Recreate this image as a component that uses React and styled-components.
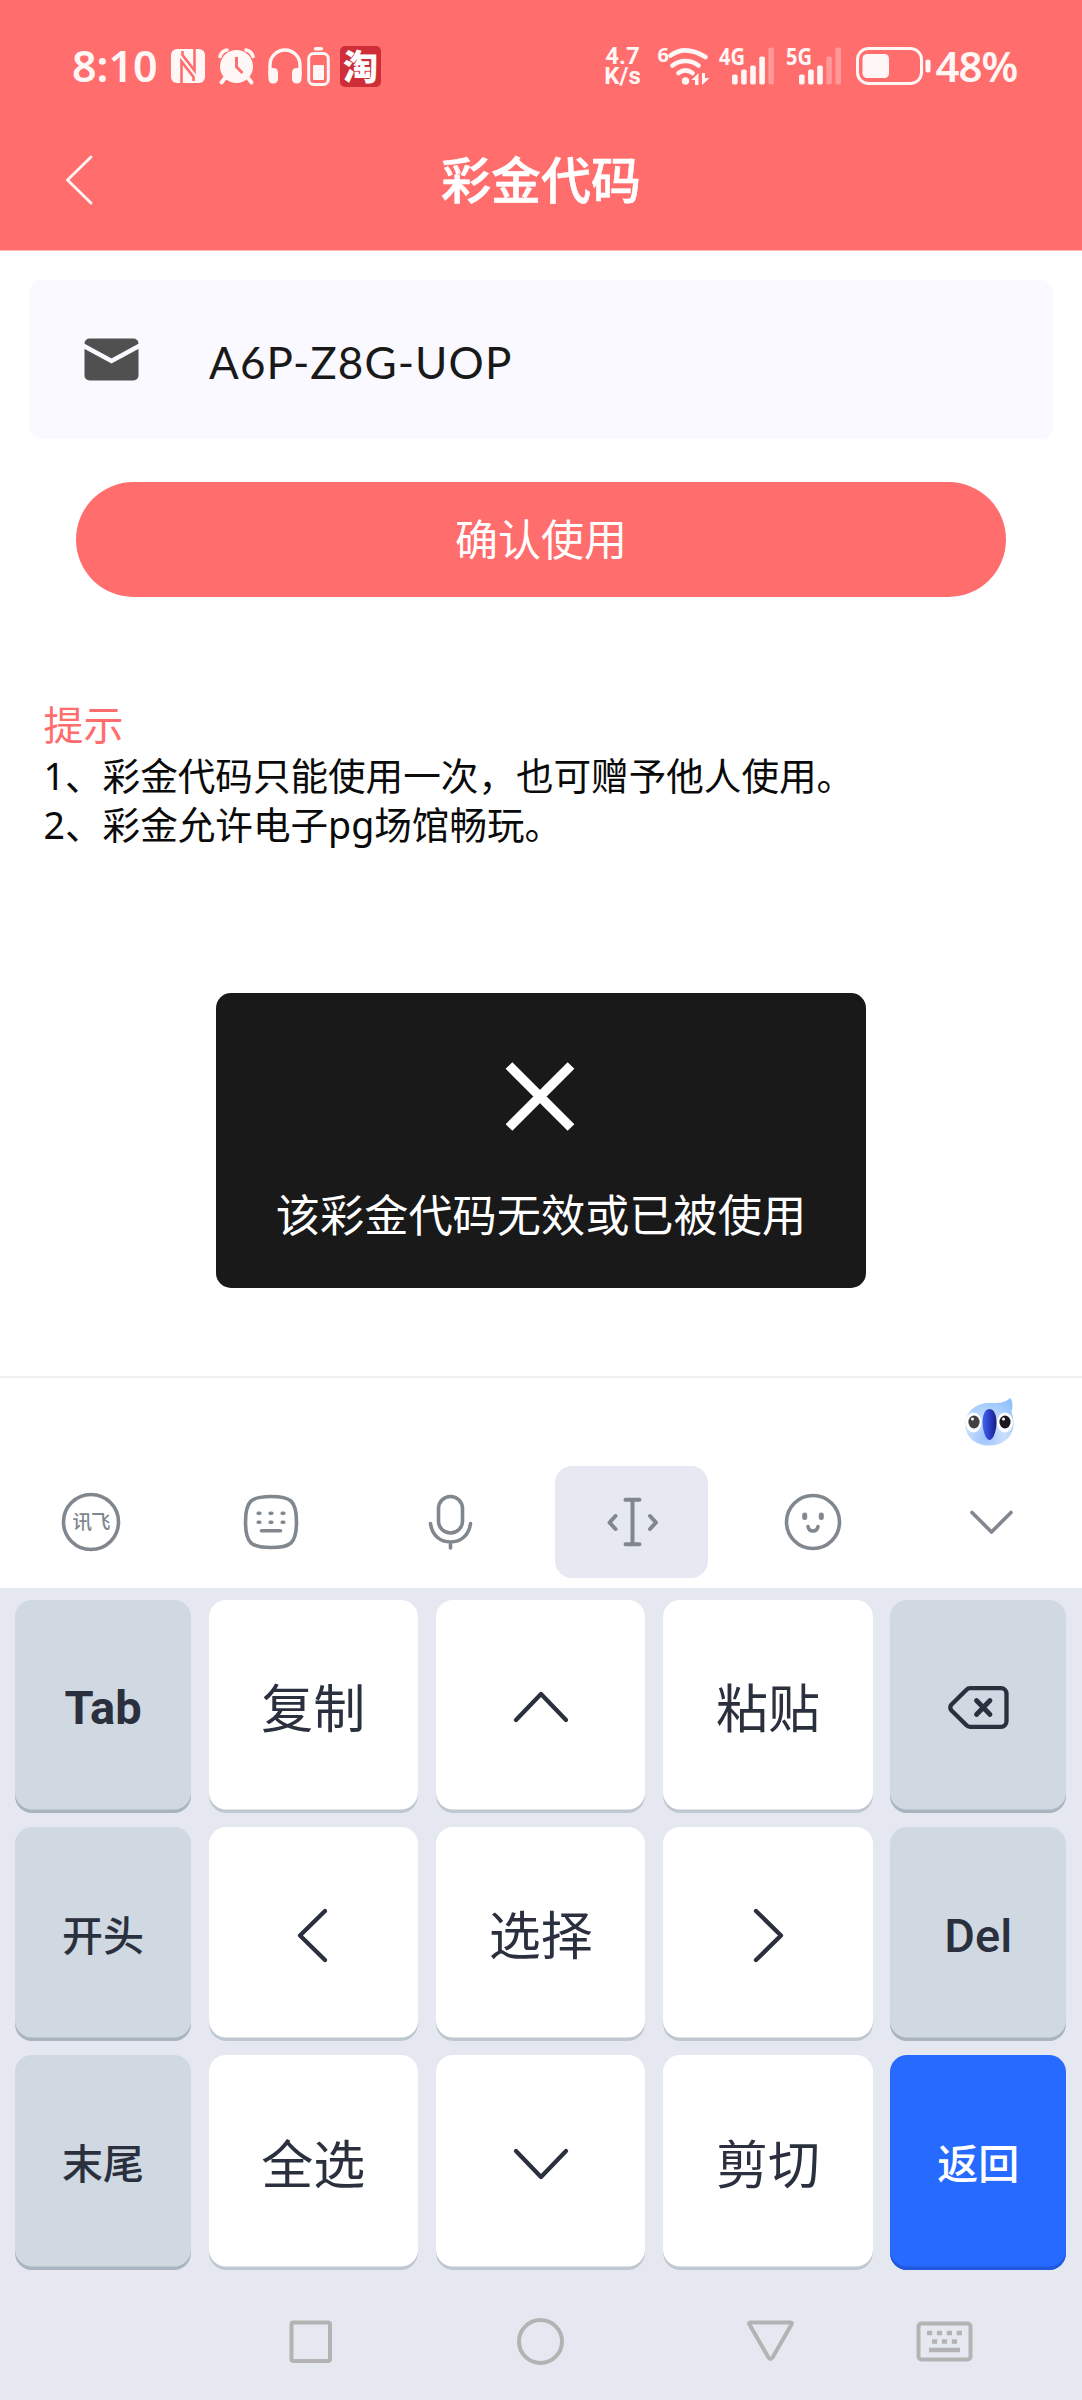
import React from 'react';
import styled, { createGlobalStyle } from 'styled-components';

const coral = '#ff6d6d';
const ink = '#2a303d';
const sans = `Lato, "Noto Sans CJK SC", sans-serif`;

const GlobalStyle = createGlobalStyle`
  * { box-sizing: border-box; }
  body { margin: 0; background: #fff; }
  svg { display: block; flex: none; overflow: visible; }
`;

const Screen = styled.div`
  position: relative;
  width: 1082px;
  height: 2400px;
  display: flex;
  flex-direction: column;
  overflow: hidden;
  background: #fff;
  font-family: ${sans};
`;

const Header = styled.header`
  flex: none;
  height: 250px;
  background: ${coral};
  color: #fff;
  box-shadow: 0 1px 0 #ffb9b9;
`;

const StatusBar = styled.div`
  height: 132px;
  padding: 0 64.5px 0 72px;
  display: flex;
  align-items: center;
  color: #fff6f6;
`;

const Slot = styled.div`
  flex: none;
  width: ${(p) => p.$w}px;
  margin-left: ${(p) => p.$gap || 0}px;
`;

const StatusText = styled.span`
  display: block;
  font: 600 ${(p) => p.$size || 44}px/44px "Noto Sans", sans-serif;
  letter-spacing: ${(p) => p.$track || 0}px;
  white-space: nowrap;
`;

const Speed = styled.div`
  display: flex;
  flex-direction: column;
  align-items: center;
  font: 700 24px/20px Roboto, sans-serif;
  white-space: nowrap;
`;

const Spacer = styled.div`
  flex: 1;
`;

const AppBadge = styled.div`
  width: 41px;
  height: 41px;
  border-radius: 5px;
  background: #cf2d38;
  color: #fff;
  font: 900 35px/37px "Noto Sans CJK SC", sans-serif;
  text-align: center;
`;

const TitleBar = styled.div`
  height: 96px;
  display: grid;
  grid-template-columns: 160px 1fr 160px;
  align-items: center;
`;

const BackButton = styled.button`
  border: 0;
  padding: 0 0 0 65px;
  background: none;
`;

const Title = styled.h1`
  margin: 0;
  text-align: center;
  font-size: 50px;
  line-height: 60px;
  font-weight: 500;
  -webkit-text-stroke: 0.6px #fff;
`;

const CodeField = styled.div`
  flex: none;
  height: 159px;
  margin: 30px 29px 0;
  padding: 0 55px;
  border-radius: 13px;
  background: #f9f9ff;
  display: flex;
  align-items: center;
`;

const Code = styled.span`
  margin: 4px 0 0 70px;
  font-size: 44px;
  line-height: 60px;
  letter-spacing: 1.1px;
  color: #191919;
  white-space: nowrap;
`;

const Confirm = styled.button`
  flex: none;
  height: 115px;
  margin: 43px 76px 0;
  padding: 0;
  border: 0;
  border-radius: 58px;
  background: ${coral};
  color: #fff;
  font-family: ${sans};
  font-size: 43px;
  line-height: 1;
`;

const Tips = styled.section`
  flex: none;
  margin: 101px 0 0 43.5px;
  color: #0a0a0a;
  font-family: "Noto Sans", "Noto Sans CJK SC", sans-serif;
  font-size: 37.6px;
  line-height: 49px;
`;

const TipsTitle = styled.h2`
  margin: 0;
  font-size: 40px;
  font-weight: 400;
  line-height: 53px;
  color: ${coral};
`;

const TipLine = styled.p`
  margin: 0;
  white-space: nowrap;
`;

const Toast = styled.div`
  position: absolute;
  top: 993px;
  left: 216px;
  width: 650px;
  height: 295px;
  padding-top: 69px;
  border-radius: 15px;
  background: #191919;
  color: #fff;
  display: flex;
  flex-direction: column;
  align-items: center;
  gap: 54px;
  font-size: 44.2px;
  line-height: 60px;
  white-space: nowrap;
`;

const Keyboard = styled.section`
  flex: none;
  height: 1024px;
  margin-top: auto;
  border-top: 2px solid #eef1f4;
  display: flex;
  flex-direction: column;
`;

const Suggestions = styled.div`
  flex: none;
  height: 82px;
  padding: 20px 67px 0 0;
  display: flex;
  justify-content: flex-end;
`;

const Tools = styled.div`
  flex: none;
  height: 128px;
  padding: 6px 0 0 1px;
  display: grid;
  grid-template-columns: repeat(6, 1fr);
  justify-items: center;
`;

const Tool = styled.div`
  width: 153px;
  height: 112px;
  border-radius: 17px;
  background: ${(p) => (p.$active ? '#e6e9f1' : 'transparent')};
  display: flex;
  align-items: center;
  justify-content: center;
`;

const LowerArea = styled.div`
  flex: 1;
  background: #e5e8f0;
`;

const Keys = styled.div`
  padding: 12px 15px 0 15.3px;
  display: grid;
  grid-template-columns: 175.5px repeat(3, 209.5px) 175.5px;
  grid-template-rows: 213px 214px 215px;
  gap: 14px 17.8px;
`;

const tones = {
  light: ['#ffffff', '#bfc7d0', ink],
  grey: ['#d0d8e2', '#aab4c0', ink],
  blue: ['#266aff', '#2059dc', '#ffffff'],
};

const Key = styled.button`
  border: 0;
  padding: 2px 0 0;
  border-radius: 17px;
  background: ${(p) => tones[p.$tone][0]};
  box-shadow: inset 0 -3.5px 0 ${(p) => tones[p.$tone][1]};
  color: ${(p) => tones[p.$tone][2]};
  display: flex;
  align-items: center;
  justify-content: center;
  font-family: ${(p) => (p.$latin ? 'Roboto, ' : '')}${sans};
  font-size: ${(p) => (p.$latin ? 47 : p.$tone === 'light' ? 52 : 41)}px;
  font-weight: ${(p) => p.$weight || (p.$tone === 'light' ? 400 : 500)};
  line-height: 1;
`;

const NavBar = styled.nav`
  height: 130px;
  padding: 12px 0 0 289px;
  display: flex;
  align-items: center;
`;

const strokeProps = { fill: 'none', strokeLinecap: 'round', strokeLinejoin: 'round' };

const NfcIcon = () => (
  <svg width="34" height="34" viewBox="0 0 34 34">
    <rect width="34" height="34" rx="6" fill="#fff6f6" />
    <g fill="none" stroke={coral} strokeWidth="2.6">
      <path d="M10.500 34V12.500L22.500 28v4" />
      <path d="M23.500 0v21.500L11.500 6V2" />
    </g>
  </svg>
);

const AlarmIcon = () => (
  <svg width="37" height="37" viewBox="0 0 37 37">
    <circle cx="18.500" cy="18.500" r="16.500" fill="#fff6f6" />
    <g stroke="#fff6f6" {...strokeProps}>
      <path d="M2 8.500C3 5 6 2.500 9 2M35 8.500C34 5 31 2.500 28 2" strokeWidth="3.600" />
      <path d="M7 30l-3.500 4.500M30 30l3.500 4.500" strokeWidth="4" />
    </g>
    <path d="M18.500 9v10l6 6" stroke={coral} strokeWidth="3" fill="none" />
  </svg>
);

const HeadphoneIcon = () => (
  <svg width="34" height="36" viewBox="0 0 34 36">
    <path d="M2 28V17a15 15 0 0 1 30 0v11" stroke="#fff6f6" strokeWidth="3.400" fill="none" />
    <rect x="0.500" y="20" width="9.500" height="15.500" rx="4.500" fill="#fff6f6" />
    <rect x="24" y="20" width="9.500" height="15.500" rx="4.500" fill="#fff6f6" />
  </svg>
);

const DeviceBatteryIcon = () => (
  <svg width="23" height="39" viewBox="0 0 23 39">
    <rect x="7" width="9" height="3.500" rx="1.500" fill="#fff6f6" />
    <rect x="1.700" y="6.500" width="19.600" height="31" rx="5" fill="none" stroke="#fff6f6" strokeWidth="3" />
    <rect x="6" y="18" width="11" height="15" rx="1" fill="#fff6f6" />
  </svg>
);

const WifiIcon = () => (
  <svg width="52" height="40" viewBox="0 0 52 40">
    <text x="-0.500" y="16" fontFamily="Noto Sans" fontWeight="700" fontSize="20" fill="#fff6f6">6</text>
    <g stroke="#fff6f6" {...strokeProps} strokeWidth="4.600">
      <path d="M12.500 9.500c9-7 21-7 35 1.500" />
      <path d="M14.500 19.500c8-6 18-6 26 0" />
      <path d="M20.500 27c4.500-3.500 9.500-3.500 14 0" />
    </g>
    <circle cx="27.500" cy="35" r="3.700" fill="#fff6f6" />
    <path d="M33.500 34l7-7v12h-3.500v-5zM44 27h3v5h4.500l-7.500 7z" fill="#fff6f6" />
  </svg>
);

const Signal = ({ label, active }) => (
  <svg width="56" height="40" viewBox="0 0 56 40">
    <text x="0" y="19" fontFamily="Noto Sans" fontWeight="700" fontSize="24" textLength="26" lengthAdjust="spacingAndGlyphs" fill="#fff6f6">{label}</text>
    {[28, 23, 19, 10, 1].map((y, i) => (
      <rect key={y} x={13 + i * 9.1} y={y + 0.5} width="5.600" height={38 - y} rx="1.800" fill="#fff6f6" opacity={i < active ? 1 : 0.32} />
    ))}
  </svg>
);

const BatteryIcon = () => (
  <svg width="75" height="38" viewBox="0 0 75 38">
    <rect x="1.500" y="1.500" width="64" height="35" rx="11" fill="none" stroke="#fff6f6" strokeWidth="3" />
    <rect x="6.500" y="7" width="26.500" height="24" rx="4.500" fill="#fff6f6" />
    <rect x="69.500" y="12.500" width="5" height="13" rx="2" fill="#fff6f6" />
  </svg>
);

const MailIcon = () => (
  <svg width="55" height="43" viewBox="0 0 55 43">
    <rect x="0.500" y="0.500" width="54" height="42" rx="5" fill="#505050" />
    <path d="M-1 7.500L27.500 23 56 7.500" stroke="#f9f9ff" strokeWidth="4.600" fill="none" />
  </svg>
);

const CrossIcon = () => (
  <svg width="70" height="69" viewBox="0 0 70 69">
    <path d="M3 3.500l62 62M65 3.500l-62 62" stroke="#fff" strokeWidth="9.500" fill="none" />
  </svg>
);

const MascotIcon = () => (
  <svg width="51" height="48" viewBox="0 0 51 48">
    <defs>
      <radialGradient id="body" cx="0.400" cy="0.850" r="0.900">
        <stop offset="0" stopColor="#9dc3fb" />
        <stop offset="0.450" stopColor="#c9defd" />
        <stop offset="1" stopColor="#8fc1fb" />
      </radialGradient>
      <linearGradient id="beak" x1="0" x2="1">
        <stop offset="0" stopColor="#4467e8" />
        <stop offset="0.500" stopColor="#2a3fc8" />
        <stop offset="1" stopColor="#171c80" />
      </linearGradient>
    </defs>
    <path d="M1.500 27C1.500 13 12 5 26 5c9 0 15 0 20-5 3 3 3 9 1.500 14 1.500 4 2 8 2 12 0 13-11 21.500-24 21.500S1.500 40 1.500 27z" fill="url(#body)" />
    <ellipse cx="9.500" cy="24.500" rx="8" ry="10" fill="#fff" />
    <ellipse cx="41" cy="24.500" rx="8" ry="10" fill="#fff" />
    <ellipse cx="10" cy="24" rx="5.600" ry="6.500" fill="#414141" />
    <ellipse cx="41" cy="24" rx="5.600" ry="6.500" fill="#1b1a1e" />
    <circle cx="8.500" cy="21" r="1.500" fill="#fff" />
    <circle cx="39.500" cy="21" r="1.500" fill="#fff" />
    <path d="M25.500 11c4.500 0 7 6 7 13.500S29.500 42 25.500 42s-7-10-7-17.500S21 11 25.500 11z" fill="url(#beak)" />
  </svg>
);

const ToolSvg = ({ children }) => (
  <svg width="60" height="60" viewBox="0 0 60 60" stroke="#81878e" strokeWidth="3.600" {...strokeProps}>
    {children}
  </svg>
);

const toolIcons = [
  <ToolSvg>
    <circle cx="30" cy="30" r="27.500" />
    <text x="11.500" y="37" fontFamily="Noto Sans CJK SC" fontWeight="500" fontSize="19.500" textLength="38" fill="#81878e" stroke="none">讯飞</text>
  </ToolSvg>,
  <ToolSvg>
    <path d="M30 4.500c19.500 0 25.500 4 25.500 25.500S49.500 55.500 30 55.500 4.500 51.500 4.500 30 10.500 4.500 30 4.500z" />
    <path d="M17.200 21.300h1.600M29.200 21.300h1.600M41.200 21.300h1.600M17.200 30.200h1.600M29.200 30.200h1.600M41.200 30.200h1.600M20.500 38.800h19" />
  </ToolSvg>,
  <ToolSvg>
    <rect x="17.500" y="4.500" width="24" height="36.500" rx="12" />
    <path d="M9.500 31.500c1.500 12 10 18.500 20 18.500s18.500-6.500 20-18.500M29.500 50v6" />
  </ToolSvg>,
  <ToolSvg>
    <path d="M23.500 7.700h14M23.500 52.300h14M30.500 7.700v44.600" strokeWidth="4" />
    <path d="M13.500 24l-6 6.500 6 6.500M48 24l6 6.500-6 6.500" strokeWidth="4" />
  </ToolSvg>,
  <ToolSvg>
    <circle cx="31" cy="30" r="26.500" />
    <path d="M22.700 23v2.500M39.300 23v2.500" strokeWidth="5" />
    <path d="M26 34.500c1 6 9 6 10 0" />
  </ToolSvg>,
  <ToolSvg>
    <path d="M10 20.500L29.500 40 49 20.500" />
  </ToolSvg>,
];

const chevronPaths = {
  up: 'M5 42l25-26 25 26',
  down: 'M5 17l25 26 25-26',
  left: 'M42 6L17 30.500 42 55',
  right: 'M18 6l25 24.500L18 55',
};

const Chevron = ({ dir }) => (
  <svg width="60" height="60" viewBox="0 0 60 60" stroke={ink} strokeWidth="4.300" {...strokeProps}>
    <path d={chevronPaths[dir]} />
  </svg>
);

const BackspaceIcon = () => (
  <svg width="61" height="43" viewBox="0 0 61 43" stroke={ink} strokeWidth="4.300" {...strokeProps}>
    <path d="M22 2.200h31a5.500 5.500 0 0 1 5.500 5.500v27.600a5.500 5.500 0 0 1-5.500 5.500H22c-1.500 0-2.500-.5-3.500-1.500L3.500 24.500c-1.700-1.800-1.700-4.200 0-6L18.500 3.700c1-1 2-1.500 3.500-1.500z" />
    <path d="M28.500 14.500l13.500 14M42 14.500l-13.500 14" strokeWidth="4.800" />
  </svg>
);

const keys = [
  ['grey', 'Tab', true, 700],
  ['light', '复制'],
  ['light', <Chevron dir="up" />],
  ['light', '粘贴'],
  ['grey', <BackspaceIcon />],
  ['grey', '开头'],
  ['light', <Chevron dir="left" />],
  ['light', '选择'],
  ['light', <Chevron dir="right" />],
  ['grey', 'Del', true],
  ['grey', '末尾'],
  ['light', '全选'],
  ['light', <Chevron dir="down" />],
  ['light', '剪切'],
  ['blue', '返回'],
];

const navStroke = { ...strokeProps, stroke: '#b3b3b3', strokeWidth: 4 };

export default function App() {
  return (
    <Screen>
      <GlobalStyle />
      <Header>
        <StatusBar>
          <Slot $w={88}><StatusText $size={43}>8:10</StatusText></Slot>
          <Slot $w={34} $gap={11}><NfcIcon /></Slot>
          <Slot $w={37} $gap={13}><AlarmIcon /></Slot>
          <Slot $w={34} $gap={13}><HeadphoneIcon /></Slot>
          <Slot $w={23} $gap={5}><DeviceBatteryIcon /></Slot>
          <Slot $w={41} $gap={10}><AppBadge>淘</AppBadge></Slot>
          <Spacer />
          <Slot $w={40}><Speed><span>4.7</span><span>K/s</span></Speed></Slot>
          <Slot $w={52} $gap={15}><WifiIcon /></Slot>
          <Slot $w={56} $gap={9}><Signal label="4G" active={4} /></Slot>
          <Slot $w={56} $gap={11}><Signal label="5G" active={3} /></Slot>
          <Slot $w={75} $gap={14}><BatteryIcon /></Slot>
          <Slot $w={82} $gap={5}><StatusText $size={42} $track={-1}>48%</StatusText></Slot>
        </StatusBar>
        <TitleBar>
          <BackButton>
            <svg width="28" height="50" viewBox="0 0 28 50" stroke="#fff6f6" strokeWidth="2.800" {...strokeProps}>
              <path d="M26 2L2.500 25 26 48" />
            </svg>
          </BackButton>
          <Title>彩金代码</Title>
        </TitleBar>
      </Header>

      <CodeField>
        <MailIcon />
        <Code>A6P-Z8G-UOP</Code>
      </CodeField>
      <Confirm>确认使用</Confirm>
      <Tips>
        <TipsTitle>提示</TipsTitle>
        <TipLine>1、彩金代码只能使用一次，也可赠予他人使用。</TipLine>
        <TipLine>2、彩金允许电子pg场馆畅玩。</TipLine>
      </Tips>

      <Toast>
        <CrossIcon />
        该彩金代码无效或已被使用
      </Toast>

      <Keyboard>
        <Suggestions><MascotIcon /></Suggestions>
        <Tools>
          {toolIcons.map((icon, i) => (
            <Tool key={i} $active={i === 3}>{icon}</Tool>
          ))}
        </Tools>
        <LowerArea>
          <Keys>
            {keys.map(([tone, content, latin, weight], i) => (
              <Key key={i} $tone={tone} $latin={latin} $weight={weight}>{content}</Key>
            ))}
          </Keys>
          <NavBar>
            <Slot $w={43}>
              <svg width="43" height="43" viewBox="0 0 43 43" {...navStroke}>
                <rect x="2.500" y="2.500" width="38.500" height="38.500" rx="2" />
              </svg>
            </Slot>
            <Slot $w={47} $gap={185}>
              <svg width="47" height="47" viewBox="0 0 47 47" {...navStroke}>
                <circle cx="23.500" cy="23.500" r="21.500" />
              </svg>
            </Slot>
            <Slot $w={47} $gap={183}>
              <svg width="47" height="42" viewBox="0 0 47 42" {...navStroke}>
                <path d="M3.500 2.500h40q2 0 1 2L25.500 37.500q-2 3-4 0L2.500 4.500q-1-2 1-2z" />
              </svg>
            </Slot>
            <Slot $w={57} $gap={122}>
              <svg width="57" height="41" viewBox="0 0 57 41" {...navStroke}>
                <rect x="2.500" y="2.500" width="52" height="36" rx="3" />
                <g strokeLinecap="butt">
                  <path d="M11 12h37" strokeWidth="4.500" strokeDasharray="5.200 4.700" />
                  <path d="M16 20.500h27" strokeWidth="4.500" strokeDasharray="5.200 4.700" />
                  <path d="M13 29h31" strokeWidth="4.500" />
                </g>
              </svg>
            </Slot>
          </NavBar>
        </LowerArea>
      </Keyboard>
    </Screen>
  );
}
